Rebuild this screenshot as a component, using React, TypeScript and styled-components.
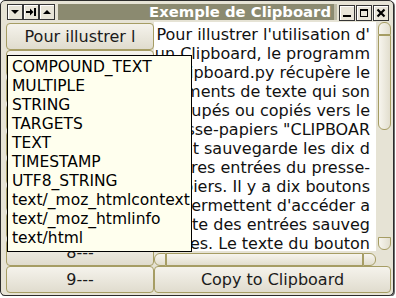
import styled, { createGlobalStyle } from 'styled-components';

const GlobalStyle = createGlobalStyle`
  html, body {
    margin: 0;
    padding: 0;
    background: #ffffff;
  }
  body {
    font-family: 'DejaVu Sans', 'Liberation Sans', sans-serif;
  }
`;

const olive = '#a69d64';

const Window = styled.div`
  position: relative;
  width: 394px;
  height: 296px;
  box-sizing: border-box;
  border: 1px solid #2c2c2c;
  border-radius: 5px;
  background: #e6e3d5;
  box-shadow: 1px 1px 0 #6d6d6d;
  display: flex;
  flex-direction: column;
  overflow: hidden;
`;

const TitleRow = styled.div`
  display: flex;
  align-items: flex-start;
  height: 21px;
  box-sizing: border-box;
  padding: 3px 4px 0 6px;
`;

const TitleButtons = styled.div<{ $right?: boolean }>`
  display: flex;
  gap: ${(p) => (p.$right ? '1px' : '0')};
  margin-top: ${(p) => (p.$right ? '1px' : '0')};
`;

const TitleButton = styled.div`
  width: 16px;
  height: 16px;
  box-sizing: border-box;
  border: 1px solid #353535;
  background: #e8e5d8;
  box-shadow: inset 1px 1px 0 #ffffff;
  display: flex;
  align-items: center;
  justify-content: center;
`;

const TitleBar = styled.div`
  flex: 1;
  height: 16px;
  margin: 0 2px 0 3px;
  background: #8b8a70;
  border-right: 3px solid #bebca8;
  color: #ffffff;
  font-weight: bold;
  font-size: 14.8px;
  line-height: 16px;
  text-align: right;
  padding-right: 3px;
  white-space: nowrap;
  overflow: hidden;
`;

const Body = styled.div`
  display: flex;
  flex: 1;
  padding: 1px 2px 2px 5px;
`;

const LeftColumn = styled.div`
  width: 149px;
  display: flex;
  flex-direction: column;
  padding-top: 1px;
`;

const PushButton = styled.div`
  height: 27px;
  box-sizing: border-box;
  border: 1px solid ${olive};
  border-radius: 4px;
  background: linear-gradient(#f5f3ec, #e0dcce);
  display: flex;
  align-items: center;
  justify-content: center;
  font-size: 16px;
  color: #1b1b1b;
  white-space: nowrap;
  overflow: hidden;
`;

const RightColumn = styled.div`
  flex: 1;
  display: flex;
  flex-direction: column;
`;

const ScrollArea = styled.div`
  display: flex;
  height: 229px;
`;

const TextView = styled.div`
  width: 222px;
  background: #ffffff;
  padding: 3px 6px 0 0;
  box-sizing: border-box;
  font-size: 16px;
  line-height: 19px;
  color: #111111;
  overflow: hidden;
`;

const TextLine = styled.div`
  display: flex;
  justify-content: flex-end;
  white-space: pre;
`;

const VScroll = styled.div`
  width: 13px;
  margin-left: 2px;
  display: flex;
  flex-direction: column;
  height: 228px;
`;

const ScrollPart = styled.div<{ $radius: string; $size?: number; $vertical?: boolean }>`
  box-sizing: border-box;
  border: 1px solid ${olive};
  border-radius: ${(p) => p.$radius};
  background: ${(p) =>
    p.$vertical ? 'linear-gradient(90deg, #f7f5ee, #e2dece)' : 'linear-gradient(#f7f5ee, #e2dece)'};
  ${(p) => (p.$vertical ? `height: ${p.$size}px;` : `width: ${p.$size}px;`)}
  flex: ${(p) => (p.$size ? 'none' : '1')};
`;

const Trough = styled.div`
  flex: 1;
`;

const HScroll = styled.div`
  display: flex;
  width: 222px;
  height: 13px;
  margin-top: 2px;
`;

const Popup = styled.div`
  position: absolute;
  left: 6px;
  top: 54px;
  width: 185px;
  height: 197px;
  box-sizing: border-box;
  border: 1px solid #000000;
  background: #ffffee;
  padding: 2px 4px;
  font-size: 15.5px;
  line-height: 19px;
  color: #000000;
  white-space: nowrap;
  overflow: hidden;
`;

const PopupItem = styled.div``;

const textLines = [
  "Pour illustrer l'utilisation d'",
  'un Clipboard, le programm',
  'e clipboard.py récupère le',
  's éléments de texte qui son',
  't coupés ou copiés vers le',
  'presse-papiers "CLIPBOAR',
  'D" et sauvegarde les dix d',
  'ernières entrées du presse-',
  'papiers. Il y a dix boutons',
  "qui permettent d'accéder a",
  'u texte des entrées sauveg',
  'ardées. Le texte du bouton',
  'est tronqué.',
];

const targets = [
  'COMPOUND_TEXT',
  'MULTIPLE',
  'STRING',
  'TARGETS',
  'TEXT',
  'TIMESTAMP',
  'UTF8_STRING',
  'text/_moz_htmlcontext',
  'text/_moz_htmlinfo',
  'text/html',
];

const entries = ['Pour illustrer l', '1---', '2---', '3---', '4---', '5---', '6---', '7---', '8---', '9---'];

function Icon({ kind }: { kind: string }) {
  return (
    <svg width="12" height="12" viewBox="0 0 12 12">
      {kind === 'down' && <path d="M2 4h8l-4 4z" fill="#000" />}
      {kind === 'up' && <path d="M2 8h8l-4-4z" fill="#000" />}
      {kind === 'shade' && (
        <g fill="#000">
          <rect x="1" y="5" width="5" height="2" />
          <path d="M5 2.5l3.5 3.5L5 9.5z" />
          <rect x="9" y="2" width="2" height="8" />
        </g>
      )}
      {kind === 'min' && <rect x="2" y="8" width="8" height="2" fill="#000" />}
      {kind === 'max' && (
        <path d="M2 2h8v8H2z M3 4v5h6V4z" fill="#000" fillRule="evenodd" />
      )}
      {kind === 'close' && (
        <path d="M2.5 2.5l7 7M9.5 2.5l-7 7" stroke="#000" strokeWidth="2.2" />
      )}
    </svg>
  );
}

export default function App() {
  return (
    <>
      <GlobalStyle />
      <Window>
        <TitleRow>
          <TitleButtons>
            <TitleButton><Icon kind="down" /></TitleButton>
            <TitleButton><Icon kind="shade" /></TitleButton>
            <TitleButton><Icon kind="up" /></TitleButton>
          </TitleButtons>
          <TitleBar>Exemple de Clipboard</TitleBar>
          <TitleButtons $right>
            <TitleButton><Icon kind="min" /></TitleButton>
            <TitleButton><Icon kind="max" /></TitleButton>
            <TitleButton><Icon kind="close" /></TitleButton>
          </TitleButtons>
        </TitleRow>
        <Body>
          <LeftColumn>
            {entries.map((e) => (
              <PushButton key={e}>{e}</PushButton>
            ))}
          </LeftColumn>
          <RightColumn>
            <ScrollArea>
              <TextView>
                {textLines.map((line, i) => (
                  <TextLine key={i}>{line}</TextLine>
                ))}
              </TextView>
              <VScroll>
                <ScrollPart $vertical $radius="6px 6px 0 0" $size={13} />
                <ScrollPart $vertical $radius="0 0 6px 6px" $size={95} />
                <Trough />
                <ScrollPart $vertical $radius="0 0 6px 6px" $size={13} />
              </VScroll>
            </ScrollArea>
            <HScroll>
              <ScrollPart $radius="6px 0 0 6px" $size={12} />
              <ScrollPart $radius="0" />
              <ScrollPart $radius="0 6px 6px 0" $size={13} />
            </HScroll>
            <PushButton>Copy to Clipboard</PushButton>
          </RightColumn>
        </Body>
        <Popup>
          {targets.map((t) => (
            <PopupItem key={t}>{t}</PopupItem>
          ))}
        </Popup>
      </Window>
    </>
  );
}
